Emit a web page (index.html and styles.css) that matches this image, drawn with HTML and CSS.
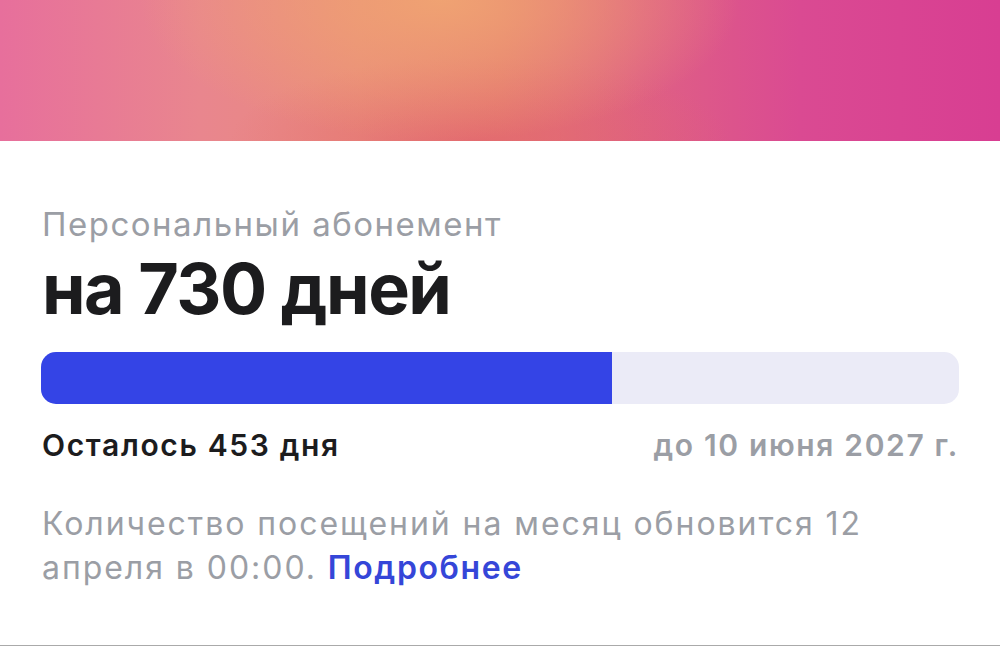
FILE: index.html
```html
<!DOCTYPE html>
<html lang="ru">
<head>
<meta charset="utf-8">
<link rel="stylesheet" href="styles.css">
</head>
<body>
<div class="page">
  <div class="hero"></div>
  <div class="content">
    <div class="subtitle">Персональный абонемент</div>
    <div class="title">на 730 дней</div>
    <div class="bar"><div class="fill" style="width:62.2%"></div></div>
    <div class="meta">
      <span class="left">Осталось 453 дня</span>
      <span class="right">до 10 июня 2027 г.</span>
    </div>
    <p class="note">Количество посещений на месяц обновится 12 апреля в 00:00. <a class="more" href="#">Подробнее</a></p>
  </div>
</div>
</body>
</html>
```

FILE: styles.css
```css
html, body {
  margin: 0;
  padding: 0;
  background: #fff;
}
.page {
  width: 1000px;
  height: 646px;
  display: flex;
  flex-direction: column;
  box-sizing: border-box;
  border-bottom: 1px solid #aaaaaa;
  overflow: hidden;
  font-family: Inter, "Noto Sans", sans-serif;
}
.hero {
  height: 141px;
  flex: none;
  background:
    radial-gradient(ellipse 30% 100% at 44% 0%, rgba(240,164,114,0.95), rgba(240,164,114,0) 100%),
    radial-gradient(ellipse 25% 60% at 48% 100%, rgba(226,100,110,0.7), rgba(226,100,110,0) 100%),
    linear-gradient(90deg, #e76f9c 0%, #e9868e 20%, #e98a7c 36%, #e57b72 50%, #df6184 64%, #da4a92 80%, #d83e92 100%);
}
.content {
  padding: 0 42px 0 42px;
  display: flex;
  flex-direction: column;
}
.subtitle {
  margin-top: 63px;
  font-size: 33px;
  line-height: 40px;
  color: #9b9ea5;
  letter-spacing: 1.5px;
}
.title {
  margin-top: 5px;
  font-size: 70px;
  line-height: 80px;
  font-weight: 700;
  color: #1c1c1e;
  letter-spacing: -1.5px;
}
.bar {
  margin: 23px -1px 0 -1px;
  height: 52px;
  border-radius: 15px;
  background: #ebebf7;
  overflow: hidden;
}
.fill {
  height: 100%;
  background: #3444e6;
}
.meta {
  margin-top: 21px;
  display: flex;
  justify-content: space-between;
  font-size: 30px;
  line-height: 40px;
  font-weight: 600;
  letter-spacing: 1.65px;
}
.left { color: #1c1c1e; }
.right { color: #9b9ea5; margin-right: -1px; }
.note {
  margin: 37px 0 0;
  font-size: 32px;
  line-height: 44px;
  color: #9b9ea5;
  letter-spacing: 1.95px;
}
.more {
  color: #3546d8;
  font-weight: 600;
  letter-spacing: 1.6px;
  text-decoration: none;
}
```
